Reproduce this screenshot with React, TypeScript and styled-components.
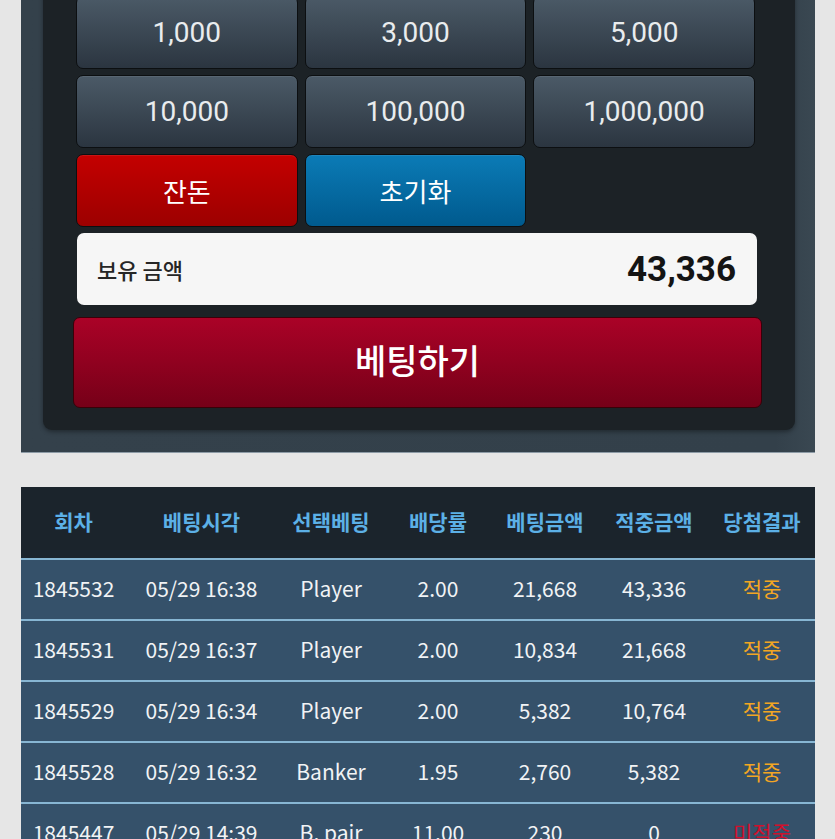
import styled, { createGlobalStyle } from "styled-components";

const GlobalStyle = createGlobalStyle`
  html, body {
    margin: 0;
    padding: 0;
    background: #e6e6e6;
    overflow: hidden;
  }
  body {
    font-family: "Noto Sans CJK KR", "Noto Sans", sans-serif;
  }
`;

const chips = ["1,000", "3,000", "5,000", "10,000", "100,000", "1,000,000"];

type Bet = {
  round: string;
  time: string;
  pick: string;
  odds: string;
  amount: string;
  win: string;
  hit: boolean;
};

const bets: Bet[] = [
  { round: "1845532", time: "05/29 16:38", pick: "Player", odds: "2.00", amount: "21,668", win: "43,336", hit: true },
  { round: "1845531", time: "05/29 16:37", pick: "Player", odds: "2.00", amount: "10,834", win: "21,668", hit: true },
  { round: "1845529", time: "05/29 16:34", pick: "Player", odds: "2.00", amount: "5,382", win: "10,764", hit: true },
  { round: "1845528", time: "05/29 16:32", pick: "Banker", odds: "1.95", amount: "2,760", win: "5,382", hit: true },
  { round: "1845447", time: "05/29 14:39", pick: "B. pair", odds: "11.00", amount: "230", win: "0", hit: false },
];

const columns = [
  { label: "회차", width: 105 },
  { label: "베팅시각", width: 151 },
  { label: "선택베팅", width: 108 },
  { label: "배당률", width: 106 },
  { label: "베팅금액", width: 108 },
  { label: "적중금액", width: 110 },
  { label: "당첨결과", width: 106 },
];

export default function App() {
  return (
    <>
      <GlobalStyle />
      <Page>
        <BetPanel>
          <BetInner>
            <ChipGrid>
              {chips.map((c) => (
                <ChipButton key={c}>{c}</ChipButton>
              ))}
              <ActionButton $tone="red">잔돈</ActionButton>
              <ActionButton $tone="blue">초기화</ActionButton>
            </ChipGrid>
            <Balance>
              <BalanceLabel>보유 금액</BalanceLabel>
              <BalanceValue>43,336</BalanceValue>
            </Balance>
            <BetButton>베팅하기</BetButton>
          </BetInner>
        </BetPanel>

        <History>
          <colgroup>
            {columns.map((c) => (
              <col key={c.label} style={{ width: c.width }} />
            ))}
          </colgroup>
          <thead>
            <tr>
              {columns.map((c) => (
                <HeadCell key={c.label}>{c.label}</HeadCell>
              ))}
            </tr>
          </thead>
          <tbody>
            {bets.map((b) => (
              <Row key={b.round}>
                <Cell>{b.round}</Cell>
                <Cell>{b.time}</Cell>
                <Cell>{b.pick}</Cell>
                <Cell>{b.odds}</Cell>
                <Cell>{b.amount}</Cell>
                <Cell>{b.win}</Cell>
                <Result $hit={b.hit}>{b.hit ? "적중" : "미적중"}</Result>
              </Row>
            ))}
          </tbody>
        </History>
      </Page>
    </>
  );
}

const Page = styled.div`
  width: 794px;
  margin: -56px 0 0 21px;
`;

const BetPanel = styled.div`
  background: linear-gradient(to right, #34414b 0%, #33404a 95%, #3a4852 100%);
  padding: 22px 20px 22px 22px;
  border-bottom: 1px solid #8d9ba6;
`;

const BetInner = styled.div`
  background: #1c2226;
  border-radius: 0 0 9px 9px;
  padding: 30px 40px 22px 33px;
  box-shadow: 0 2px 4px rgba(0, 0, 0, 0.35);
  display: flex;
  flex-direction: column;
`;

const ChipGrid = styled.div`
  display: grid;
  grid-template-columns: repeat(3, 1fr);
  grid-auto-rows: 73px;
  column-gap: 7px;
  row-gap: 6px;
`;

const ChipButton = styled.button`
  border: 1px solid #0c0f11;
  border-radius: 7px;
  background: linear-gradient(to bottom, #4b5a67, #2b3540);
  box-shadow: inset 0 1px 0 rgba(255, 255, 255, 0.08);
  color: #e9ecee;
  font-family: Roboto, "Noto Sans", sans-serif;
  font-size: 28px;
  padding: 0;
  cursor: pointer;
`;

const ActionButton = styled(ChipButton)<{ $tone: "red" | "blue" }>`
  font-family: "Noto Sans CJK KR", sans-serif;
  font-size: 26px;
  color: #ffffff;
  background: ${(p) =>
    p.$tone === "red"
      ? "linear-gradient(to bottom, #c40000, #9c0000)"
      : "linear-gradient(to bottom, #0b7bb6, #005a8e)"};
`;

const Balance = styled.div`
  margin: 6px -2px 0 1px;
  height: 72px;
  background: #f6f6f6;
  border-radius: 7px;
  display: flex;
  align-items: center;
  justify-content: space-between;
  padding: 0 21px 0 20px;
  box-sizing: border-box;
`;

const BalanceLabel = styled.span`
  font-size: 22px;
  font-weight: 500;
  color: #262626;
`;

const BalanceValue = styled.span`
  font-family: Roboto, "Noto Sans", sans-serif;
  font-size: 35px;
  font-weight: 700;
  color: #141414;
`;

const BetButton = styled.button`
  margin: 12px -7px 0 -3px;
  height: 91px;
  padding: 0 0 6px;
  border: 1px solid #3a0008;
  border-radius: 7px;
  background: linear-gradient(to bottom, #aa0227, #760018);
  color: #ffffff;
  font-family: "Noto Sans CJK KR", sans-serif;
  font-size: 34px;
  font-weight: 500;
  cursor: pointer;
`;

const History = styled.table`
  width: 794px;
  margin-top: 34px;
  border-collapse: collapse;
  table-layout: fixed;
  font-family: "Noto Sans CJK KR", sans-serif;
`;

const HeadCell = styled.th`
  height: 67px;
  padding: 0 0 4px;
  background: #1b242c;
  color: #5cb0e6;
  font-size: 21px;
  font-weight: 700;
  text-align: center;
`;

const Row = styled.tr`
  background: #35516a;
  border-top: 2px solid #87b6d3;
`;

const Cell = styled.td`
  height: 56px;
  padding: 0 0 3px;
  color: #f1f3f5;
  font-size: 21px;
  text-align: center;
  white-space: nowrap;
`;

const Result = styled(Cell)<{ $hit: boolean }>`
  color: ${(p) => (p.$hit ? "#f2a623" : "#d0102c")};
`;
